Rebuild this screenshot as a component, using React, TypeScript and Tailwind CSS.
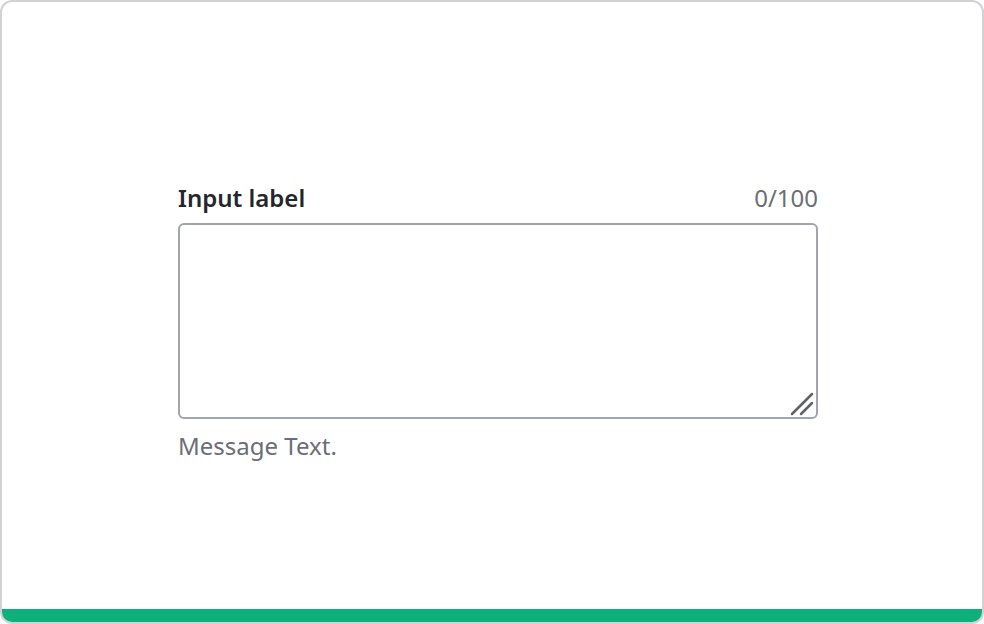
import { useState } from "react";

export default function App() {
  const [value, setValue] = useState("");
  const max = 100;

  return (
    <div className="w-[984px] h-[624px] bg-white" style={{ fontFamily: '"Noto Sans", "Open Sans", sans-serif' }}>
      <div className="w-full h-full border-2 border-[#d2d2d4] rounded-[12px] overflow-hidden flex flex-col">
        <div className="flex-1 pt-[180px] pl-[176px]">
          <div className="w-[640px] flex flex-col">
            <div className="flex items-center justify-between mb-[9px]">
              <label htmlFor="message" className="text-[24px] leading-[32px] font-semibold text-[#25262a]">
                Input label
              </label>
              <span className="text-[24px] leading-[32px] text-[#6b6e76]">
                {value.length}/{max}
              </span>
            </div>
            <div className="relative">
              <textarea
                id="message"
                value={value}
                maxLength={max}
                onChange={(e) => setValue(e.target.value)}
                className="block w-full h-[196px] border-2 border-[#a1a4ae] rounded-[6px] px-3 py-2 text-[24px] outline-none resize-none"
              />
              {/* resize grip */}
              <svg
                className="absolute right-[3px] bottom-[3px] pointer-events-none"
                width="26"
                height="26"
                viewBox="0 0 26 26"
              >
                <path d="M3 24 L23 4" stroke="#5f6269" strokeWidth="2.5" strokeLinecap="round" />
                <path d="M12 24 L23 13" stroke="#5f6269" strokeWidth="2.5" strokeLinecap="round" />
              </svg>
            </div>
            <p className="mt-[11px] text-[24px] leading-[32px] text-[#6b6e76]">Message Text.</p>
          </div>
        </div>
        <div className="h-[13px] bg-[#0db07a]" />
      </div>
    </div>
  );
}
